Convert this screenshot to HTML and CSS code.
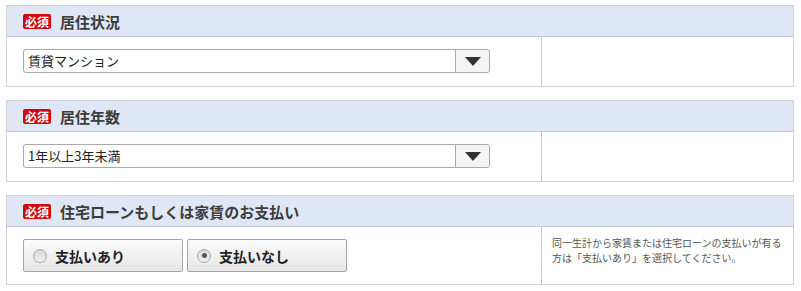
FILE: index.html
```html
<!DOCTYPE html>
<html lang="ja">
<head>
    <meta charset="UTF-8">
    <meta name="viewport" content="width=device-width, initial-scale=1.0">
    <title>入力フォーム</title>
    <link rel="stylesheet" href="styles.css">
</head>
<body>
    <div class="form">
        <div class="section">
            <div class="section-head">
                <span class="required">必須</span>
                <span class="title">居住状況</span>
            </div>
            <div class="section-body">
                <div class="field">
                    <div class="select">
                        <span class="select-value">賃貸マンション</span>
                        <span class="select-btn"><span class="arrow"></span></span>
                    </div>
                </div>
                <div class="note"></div>
            </div>
        </div>

        <div class="section">
            <div class="section-head">
                <span class="required">必須</span>
                <span class="title">居住年数</span>
            </div>
            <div class="section-body">
                <div class="field">
                    <div class="select">
                        <span class="select-value">1年以上3年未満</span>
                        <span class="select-btn"><span class="arrow"></span></span>
                    </div>
                </div>
                <div class="note"></div>
            </div>
        </div>

        <div class="section">
            <div class="section-head">
                <span class="required">必須</span>
                <span class="title">住宅ローンもしくは家賃のお支払い</span>
            </div>
            <div class="section-body tall">
                <div class="field radios">
                    <label class="radio-btn">
                        <span class="radio"></span>
                        <span>支払いあり</span>
                    </label>
                    <label class="radio-btn">
                        <span class="radio checked"></span>
                        <span>支払いなし</span>
                    </label>
                </div>
                <div class="note">同一生計から家賃または住宅ローンの支払いが有る方は「支払いあり」を選択してください。</div>
            </div>
        </div>
    </div>
</body>
</html>
```

FILE: styles.css
```css
body {
    margin: 0;
    font-family: "Noto Sans CJK JP", "Noto Sans", sans-serif;
    background-color: #fff;
    color: #333;
}

.form {
    padding: 5px 7px 0 6px;
}

.section {
    border: 1px solid #d2d2d2;
    margin-bottom: 13px;
}

.section-head {
    display: flex;
    align-items: center;
    height: 30px;
    padding-left: 16px;
    background-color: #dfe7f6;
    border-bottom: 1px solid #c4cad4;
}

.required {
    display: inline-block;
    background-color: #d1090f;
    color: #fff;
    font-size: 12px;
    font-weight: bold;
    line-height: 15px;
    padding: 0 2px;
    border-radius: 2px;
    margin-right: 9px;
}

.title {
    font-size: 15px;
    font-weight: bold;
    color: #3c3c3c;
}

.section-body {
    display: flex;
    height: 49px;
}

.section-body.tall {
    height: 57px;
}

.field {
    width: 518px;
    padding: 12px 0 0 16px;
    border-right: 1px solid #c8c8c8;
}

.select {
    display: flex;
    width: 465px;
    height: 22px;
    border: 1px solid #a9a9a9;
    border-radius: 3px;
    background-color: #fff;
}

.select-value {
    flex: 1;
    font-size: 13px;
    line-height: 22px;
    padding-left: 4px;
    color: #222;
}

.select-btn {
    display: flex;
    align-items: center;
    justify-content: center;
    width: 33px;
    border-left: 1px solid #a9a9a9;
    background-color: #f4f4f4;
    border-radius: 0 3px 3px 0;
}

.arrow {
    width: 0;
    height: 0;
    border-left: 8px solid transparent;
    border-right: 8px solid transparent;
    border-top: 9px solid #333;
}

.radios {
    display: flex;
    gap: 4px;
    padding-top: 12px;
}

.radio-btn {
    display: flex;
    align-items: center;
    box-sizing: border-box;
    width: 160px;
    height: 33px;
    padding-left: 9px;
    border: 1px solid #a4a4a4;
    border-radius: 2px;
    background: linear-gradient(#fbfbfb, #e6e6e6);
    font-size: 14px;
    font-weight: bold;
    color: #222;
}

.radio {
    position: relative;
    width: 12px;
    height: 12px;
    margin-right: 8px;
    border: 1px solid #a8a8a8;
    border-radius: 50%;
    background: linear-gradient(#d8d8d8, #f2f2f2);
}

.radio.checked::after {
    content: "";
    position: absolute;
    left: 3.5px;
    top: 3.5px;
    width: 5px;
    height: 5px;
    border-radius: 50%;
    background-color: #555;
}

.note {
    flex: 1;
    padding: 8px 10px 0 10px;
    font-size: 10px;
    line-height: 15px;
    color: #555;
}
```
